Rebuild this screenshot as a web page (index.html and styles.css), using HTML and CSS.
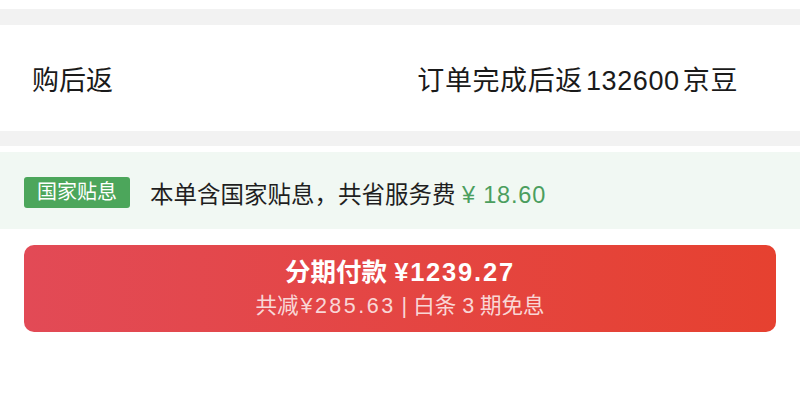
FILE: index.html
```html
<html>
  <head>
    <meta charset="utf-8">
    <link rel="stylesheet" href="styles.css">
  </head>
  <body>

  <div class="top"></div>
  <div class="gap"></div>

  <div class="row">
    <span class="label">购后返</span>
    <span class="value">订单完成后返 132600 京豆</span>
  </div>

  <div class="gap gap-2"></div>

  <div class="subsidy">
    <span class="badge">国家贴息</span>
    <span class="subsidy-text">本单含国家贴息，共省服务费 <span class="saved">¥ 18.60</span></span>
  </div>

  <div class="pay">
    <div class="pay-btn">
      <div class="pay-title">分期付款 <span class="price">¥1239.27</span></div>
      <div class="pay-sub">共减<span class="num">¥285.63</span> | 白条 3 期免息</div>
    </div>
  </div>

  </body>
</html>
```

FILE: styles.css
```css
  body {
    margin: 0;
    background-color: #ffffff;
    font-family: "Liberation Sans", "Noto Sans CJK SC", sans-serif;
    color: #1a1a1a;
  }

  .top {
    height: 9px;
  }

  .gap {
    height: 16px;
    background-color: #f2f2f2;
  }

  .gap-2 {
    height: 15px;
  }

  .row {
    height: 106px;
    display: flex;
    align-items: center;
    justify-content: space-between;
    padding: 0 62px 0 32px;
    font-size: 27px;
  }

  .value {
    letter-spacing: 0.6px;
    word-spacing: -5px;
  }

  .subsidy {
    margin-top: 6px;
    height: 77px;
    background-color: #f1f8f3;
    display: flex;
    align-items: center;
    padding-left: 24px;
  }

  .badge {
    margin-top: 4px;
    background-color: #4ca65b;
    color: #ffffff;
    font-size: 20px;
    line-height: 31px;
    height: 31px;
    padding: 0 13px;
    border-radius: 3px;
  }

  .subsidy-text {
    margin-left: 20px;
    margin-top: 4px;
    font-size: 23.5px;
    color: #1f1f1f;
  }

  .saved {
    color: #4b9e5e;
    letter-spacing: 0.8px;
  }

  .pay {
    padding: 16px 24px;
  }

  .pay-btn {
    height: 87px;
    border-radius: 10px;
    background: linear-gradient(90deg, #e24a56, #e64130);
    color: #ffffff;
    display: flex;
    flex-direction: column;
    align-items: center;
    justify-content: center;
  }

  .pay-title {
    font-size: 25.5px;
    font-weight: bold;
    line-height: 34px;
  }

  .price {
    letter-spacing: 1.8px;
  }

  .pay-sub {
    font-size: 21.5px;
    line-height: 34px;
    color: rgba(255, 255, 255, 0.8);
  }

  .num {
    letter-spacing: 2.5px;
    margin-left: 2px;
  }
```
